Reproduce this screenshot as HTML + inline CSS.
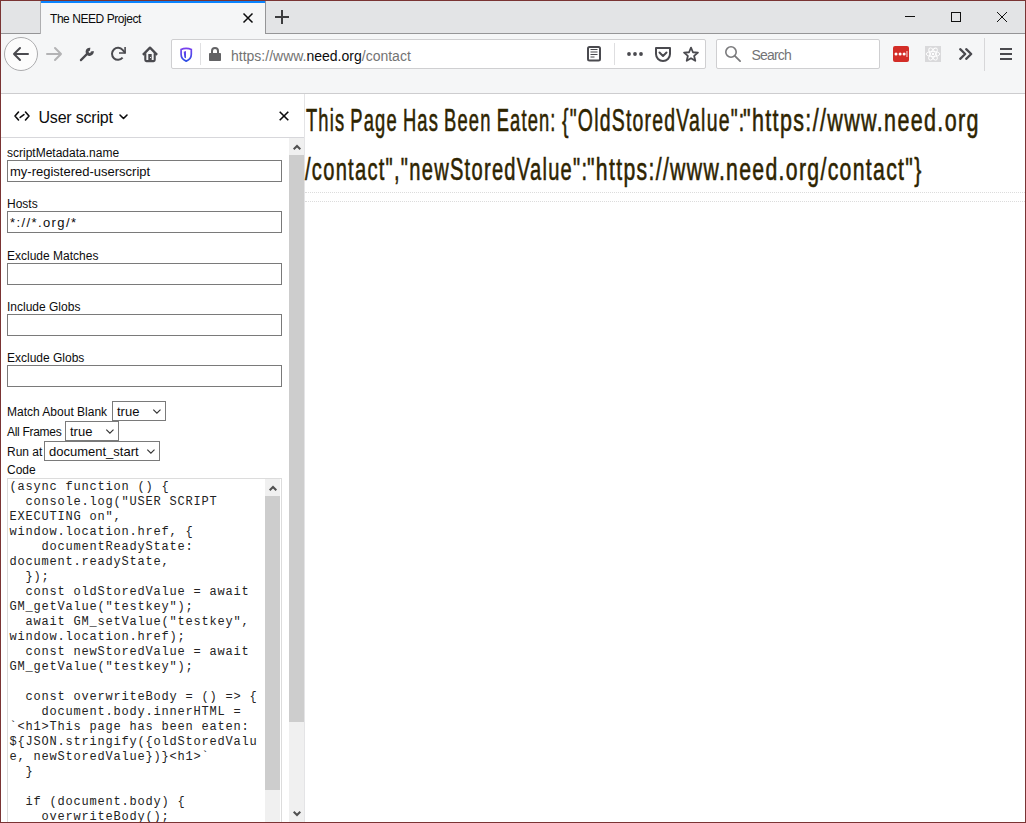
<!DOCTYPE html>
<html><head><meta charset="utf-8">
<style>
*{margin:0;padding:0;box-sizing:border-box}
html,body{width:1026px;height:823px;overflow:hidden;background:#fff;font-family:"Liberation Sans",sans-serif}
.a{position:absolute}
svg{position:absolute;overflow:visible}
#win{position:absolute;left:0;top:0;width:1026px;height:823px;border:1px solid #7a3434;overflow:hidden}
#tabbar{left:0;top:0;width:1024px;height:33px;background:#e3e4e6;border-bottom:1px solid #959597}
#tab{left:40px;top:0;width:225px;height:33px;background:#f5f6f7;border-right:1px solid #959597}
#tabline{left:40px;top:0;width:224px;height:2px;background:#0a84ff}
#nav{left:0;top:33px;width:1024px;height:60px;background:#f5f6f7;border-bottom:1px solid #cdcdcf}
.t{position:absolute;white-space:pre;line-height:1}
#urlbar{left:170px;top:38px;width:535px;height:30px;background:#fff;border:1px solid #cfcfd1;border-radius:2px}
#search{left:715px;top:38px;width:164px;height:30px;background:#fff;border:1px solid #cfcfd1;border-radius:2px}
#side{left:0;top:93px;width:303px;height:729px;background:#fff}
#split{left:303px;top:93px;width:1px;height:729px;background:#e4e4e6}
#shead{left:0;top:136px;width:303px;height:1px;background:#d7d7db}
.lab{font-size:12px;color:#0c0c0d}
.inp{position:absolute;left:6px;width:275px;height:22px;border:1px solid #7a7a7a;background:#fff}
.itx{font-size:13px;color:#0c0c0d}
.sel{position:absolute;height:20px;border:1px solid #7a7a7a;background:#fff}
#code{left:6px;top:477px;width:275px;height:360px;border:1px solid #dcdcdc;background:#fff}
#codetext{left:8.5px;top:479px;font-family:"Liberation Mono",monospace;font-size:12px;letter-spacing:0.8px;line-height:15px;color:#222;white-space:pre}
.h1{position:absolute;left:304px;font-size:32px;color:#2e2400;-webkit-text-stroke:0.6px #2e2400;letter-spacing:2px;word-spacing:-2px;white-space:pre;transform-origin:0 0;line-height:1}
</style></head><body>
<div id="win">
 <div id="tabbar" class="a"></div>
 <div id="tab" class="a"></div>
 <div id="tabline" class="a"></div>
 <div class="a" style="left:39px;top:0;width:1px;height:33px;background:#aeaeb0"></div>
 <div class="t" style="left:49px;top:12px;font-size:12px;color:#0c0c0d;letter-spacing:-0.45px">The NEED Project</div>
 <!-- tab close -->
 <svg style="left:242px;top:12px" width="10" height="10" viewBox="0 0 10 10"><path d="M0.5 0.5L9.5 9.5M9.5 0.5L0.5 9.5" stroke="#0c0c0d" stroke-width="1.5"/></svg>
 <!-- new tab -->
 <svg style="left:274px;top:9px" width="14" height="14" viewBox="0 0 14 14"><path d="M7 0V14M0 7H14" stroke="#3c3c3e" stroke-width="2"/></svg>
 <!-- window controls -->
 <svg style="left:904px;top:15px" width="10" height="1"><rect x="0" y="0" width="10" height="1" fill="#111"/></svg>
 <svg style="left:950px;top:11px" width="10" height="10"><rect x="0.5" y="0.5" width="9" height="9" fill="none" stroke="#111" stroke-width="1"/></svg>
 <svg style="left:996px;top:11px" width="10" height="10"><path d="M0 0L10 10M10 0L0 10" stroke="#111" stroke-width="1"/></svg>

 <div id="nav" class="a"></div>
 <!-- back -->
 <div class="a" style="left:3px;top:36px;width:34px;height:34px;border-radius:50%;border:1px solid #acacae;background:#fcfcfc"></div>
 <svg style="left:12px;top:45px" width="16" height="16" viewBox="0 0 16 16"><path d="M15 8H1M7 2L1 8L7 14" fill="none" stroke="#4a4a4f" stroke-width="2" stroke-linecap="round" stroke-linejoin="round"/></svg>
 <!-- forward -->
 <svg style="left:45px;top:45px" width="16" height="16" viewBox="0 0 16 16"><path d="M1 8H15M9 2L15 8L9 14" fill="none" stroke="#b3b3b5" stroke-width="2" stroke-linecap="round" stroke-linejoin="round"/></svg>
 <!-- wrench -->
 <svg style="left:78px;top:46px" width="16" height="16" viewBox="0 0 16 16"><path d="M1.9 13.1L8.4 6.6" stroke="#4a4a4f" stroke-width="2.2" stroke-linecap="round"/><path d="M13.26 4.35A2.6 2.6 0 1 1 11.15 2.24" fill="none" stroke="#4a4a4f" stroke-width="3"/></svg>
 <!-- reload -->
 <svg style="left:110px;top:46px" width="16" height="16" viewBox="0 0 16 16"><path d="M11.6 10.66A6 6 0 1 1 11.6 2.94L14.2 5.8" fill="none" stroke="#4a4a4f" stroke-width="2"/><path d="M13.3 0H14.9V6.7H8V5.2H13.3Z" fill="#4a4a4f"/></svg>
 <!-- home -->
 <svg style="left:141px;top:45px" width="16" height="17" viewBox="0 0 16 17"><path d="M0.9 8.9L8 1.6L15.1 8.9" fill="none" stroke="#4a4a4f" stroke-width="2.3" stroke-linejoin="round"/><path d="M3.3 7.3V14Q3.3 15.1 4.4 15.1H11.6Q12.7 15.1 12.7 14V7.3" fill="none" stroke="#4a4a4f" stroke-width="2.1"/><rect x="6.3" y="8" width="3.4" height="7" fill="#4a4a4f"/><rect x="8" y="11" width="1" height="1" fill="#e8e8e8"/></svg>

 <div id="urlbar" class="a"></div>
 <!-- shield -->
 <svg style="left:179px;top:46px" width="13" height="15" viewBox="0 0 13 15"><defs><linearGradient id="sg" gradientUnits="userSpaceOnUse" x1="0" y1="1" x2="0" y2="14"><stop offset="0" stop-color="#7a40ee"/><stop offset="1" stop-color="#2d4fe4"/></linearGradient></defs><path d="M6.2 1.3C8.2 1.3 9.9 1.7 11.3 2.4V7.2C11.3 10.5 9.2 12.9 6.2 14.1C3.2 12.9 1.1 10.5 1.1 7.2V2.4C2.5 1.7 4.2 1.3 6.2 1.3Z" fill="none" stroke="url(#sg)" stroke-width="1.7"/><path d="M3.7 4.7L6.0 4.1V11.3L4.4 10.4Z" fill="url(#sg)"/></svg>
 <div class="a" style="left:199px;top:42px;width:1px;height:22px;background:#e0e0e2"></div>
 <!-- lock -->
 <svg style="left:208px;top:46px" width="12" height="15" viewBox="0 0 12 15"><path d="M3 6.5V4A3 3 0 0 1 9 4V6.5" fill="none" stroke="#636365" stroke-width="2"/><rect x="0" y="6" width="12" height="8" rx="0.8" fill="#636365"/></svg>
 <div class="t" style="left:230px;top:48px;font-size:14px;color:#737373">https://www.<span style="color:#0c0c0d">need.org</span>/contact</div>
 <!-- reader -->
 <svg style="left:586px;top:45px" width="14" height="16" viewBox="0 0 14 16"><rect x="1" y="1" width="12" height="13.5" rx="1.5" fill="none" stroke="#4a4a4f" stroke-width="2"/><path d="M3.5 3.5H10.5M3.5 6H10.5M3.5 8.5H10.5M3.5 11H7.5" stroke="#4a4a4f" stroke-width="1.1"/></svg>
 <div class="a" style="left:613px;top:42px;width:1px;height:22px;background:#dedee0"></div>
 <!-- dots -->
 <svg style="left:626px;top:51px" width="16" height="4"><circle cx="2" cy="2" r="1.9" fill="#4a4a4f"/><circle cx="8" cy="2" r="1.9" fill="#4a4a4f"/><circle cx="14" cy="2" r="1.9" fill="#4a4a4f"/></svg>
 <!-- pocket -->
 <svg style="left:654px;top:46px" width="16" height="15" viewBox="0 0 16 15"><path d="M1 1H15V7A7 7 0 0 1 1 7Z" fill="none" stroke="#4a4a4f" stroke-width="2" stroke-linejoin="round"/><path d="M4.5 5.5L8 9L11.5 5.5" fill="none" stroke="#4a4a4f" stroke-width="2" stroke-linecap="round" stroke-linejoin="round"/></svg>
 <!-- star -->
 <svg style="left:682px;top:45px" width="16" height="16" viewBox="0 0 16 16"><path d="M8.00 1.60L9.94 6.23L14.94 6.64L11.14 9.92L12.29 14.81L8.00 12.20L3.71 14.81L4.86 9.92L1.06 6.64L6.06 6.23Z" fill="none" stroke="#4a4a4f" stroke-width="1.8" stroke-linejoin="round"/></svg>

 <div id="search" class="a"></div>
 <svg style="left:724px;top:45px" width="16" height="16" viewBox="0 0 16 16"><circle cx="6" cy="6" r="5.2" fill="none" stroke="#7a7a7c" stroke-width="1.6"/><path d="M9.8 9.8L15.1 15.1" stroke="#7a7a7c" stroke-width="1.8" stroke-linecap="round"/></svg>
 <div class="t" style="left:750.5px;top:47px;font-size:14px;color:#737375;letter-spacing:-0.8px">Search</div>

 <!-- lastpass -->
 <div class="a" style="left:892px;top:45px;width:16px;height:16px;background:#d32d27;border-radius:2px"></div>
 <svg style="left:892px;top:45px" width="16" height="16"><circle cx="3" cy="7.9" r="1.5" fill="#fff"/><circle cx="7.1" cy="7.9" r="1.5" fill="#fff"/><circle cx="11.1" cy="7.9" r="1.5" fill="#fff"/><rect x="13.4" y="5" width="1.1" height="6" fill="rgba(255,255,255,0.75)"/></svg>
 <!-- react -->
 <div class="a" style="left:924px;top:45px;width:16px;height:16px;background:#d9d9db"></div>
 <svg style="left:924px;top:45px" width="16" height="16" viewBox="0 0 16 16"><g fill="none" stroke="#fff" stroke-width="0.9"><ellipse cx="8" cy="8" rx="6.8" ry="2.6"/><ellipse cx="8" cy="8" rx="6.8" ry="2.6" transform="rotate(60 8 8)"/><ellipse cx="8" cy="8" rx="6.8" ry="2.6" transform="rotate(120 8 8)"/></g><circle cx="8" cy="8" r="1.2" fill="#fff"/></svg>
 <!-- chevrons -->
 <svg style="left:958px;top:47px" width="14" height="13" viewBox="0 0 14 13"><path d="M1.2 1.2L6.2 6L1.2 10.8M7.2 1.2L12.2 6L7.2 10.8" fill="none" stroke="#4a4a4f" stroke-width="2.3" stroke-linecap="round" stroke-linejoin="round"/></svg>
 <div class="a" style="left:983px;top:37px;width:1px;height:33px;background:#d7d7d9"></div>
 <!-- hamburger -->
 <svg style="left:999px;top:47px" width="12" height="13"><rect x="0" y="0" width="12" height="2" fill="#4a4a4f"/><rect x="0" y="5" width="12" height="2" fill="#4a4a4f"/><rect x="0" y="10" width="12" height="2" fill="#4a4a4f"/></svg>

 <!-- sidebar -->
 <div id="side" class="a"></div>
 <div id="split" class="a"></div>
 <div id="shead" class="a"></div>
 <svg style="left:13px;top:109px" width="16" height="12" viewBox="0 0 16 12"><path d="M4.5 2L1 6L4.5 10M11.5 2L15 6L11.5 10M9.9 4.6L6.2 7.4" fill="none" stroke="#0c0c0d" stroke-width="1.6" stroke-linecap="round" stroke-linejoin="round"/></svg>
 <div class="t" style="left:37.5px;top:109px;font-size:16px;color:#0c0c0d;letter-spacing:-0.2px">User script</div>
 <svg style="left:118px;top:113px" width="9" height="6" viewBox="0 0 9 6"><path d="M1 1L4.5 4.5L8 1" fill="none" stroke="#0c0c0d" stroke-width="1.6" stroke-linecap="round" stroke-linejoin="round"/></svg>
 <svg style="left:278px;top:110px" width="10" height="10" viewBox="0 0 10 10"><path d="M0.7 0.7L9.3 9.3M9.3 0.7L0.7 9.3" stroke="#0c0c0d" stroke-width="1.6"/></svg>

 <!-- sidebar scrollbar -->
 <div class="a" style="left:288px;top:137px;width:15px;height:685px;background:#f0f0f0"></div>
 <div class="a" style="left:288px;top:154px;width:15px;height:567px;background:#cdcdcd"></div>
 <svg style="left:292px;top:143px" width="8" height="6" viewBox="0 0 8 6"><path d="M0 4.6L4 0.6L8 4.6L6.6 6L4 3.4L1.4 6Z" fill="#505050"/></svg>
 <svg style="left:292px;top:810px" width="8" height="6" viewBox="0 0 8 6"><path d="M0 1.4L1.4 0L4 2.6L6.6 0L8 1.4L4 5.4Z" fill="#505050"/></svg>

 <div class="t lab" style="left:6px;top:146px">scriptMetadata.name</div>
 <div class="inp" style="top:159px"></div>
 <div class="t itx" style="left:9px;top:164px">my-registered-userscript</div>
 <div class="t lab" style="left:6px;top:197px">Hosts</div>
 <div class="inp" style="top:210px"></div>
 <div class="t itx" style="left:9px;top:215px;letter-spacing:1.4px">*://*.org/*</div>
 <div class="t lab" style="left:6px;top:249px">Exclude Matches</div>
 <div class="inp" style="top:262px"></div>
 <div class="t lab" style="left:6px;top:300px">Include Globs</div>
 <div class="inp" style="top:313px"></div>
 <div class="t lab" style="left:6px;top:351px">Exclude Globs</div>
 <div class="inp" style="top:364px"></div>

 <div class="t lab" style="left:6px;top:405px">Match About Blank</div>
 <div class="sel" style="left:111px;top:400px;width:54px"></div>
 <div class="t itx" style="left:116px;top:404px">true</div>
 <svg style="left:151px;top:408px" width="9" height="5" viewBox="0 0 9 5"><path d="M1.3 0.6L4.9 4.2L8.5 0.6" fill="none" stroke="#333" stroke-width="1.15"/></svg>
 <div class="t lab" style="left:6px;top:425px;letter-spacing:-0.3px">All Frames</div>
 <div class="sel" style="left:64px;top:420px;width:54px"></div>
 <div class="t itx" style="left:69px;top:424px">true</div>
 <svg style="left:104px;top:428px" width="9" height="5" viewBox="0 0 9 5"><path d="M1.3 0.6L4.9 4.2L8.5 0.6" fill="none" stroke="#333" stroke-width="1.15"/></svg>
 <div class="t lab" style="left:6px;top:445px">Run at</div>
 <div class="sel" style="left:43px;top:440px;width:116px"></div>
 <div class="t itx" style="left:48px;top:444px">document_start</div>
 <svg style="left:145px;top:448px" width="9" height="5" viewBox="0 0 9 5"><path d="M1.3 0.6L4.9 4.2L8.5 0.6" fill="none" stroke="#333" stroke-width="1.15"/></svg>
 <div class="t lab" style="left:6px;top:463px">Code</div>

 <div id="code" class="a"></div>
 <div id="codetext" class="a">(async function () {
  console.log("USER SCRIPT
EXECUTING on",
window.location.href, {
    documentReadyState:
document.readyState,
  });
  const oldStoredValue = await
GM_getValue("testkey");
  await GM_setValue("testkey",
window.location.href);
  const newStoredValue = await
GM_getValue("testkey");

  const overwriteBody = () =&gt; {
    document.body.innerHTML =
`&lt;h1&gt;This page has been eaten:
${JSON.stringify({oldStoredValu
e, newStoredValue})}&lt;h1&gt;`
  }

  if (document.body) {
    overwriteBody();
  }</div>
 <!-- code scrollbar -->
 <div class="a" style="left:264px;top:478px;width:15px;height:344px;background:#f0f0f0"></div>
 <div class="a" style="left:264px;top:495px;width:15px;height:294px;background:#cdcdcd"></div>
 <svg style="left:268px;top:484px" width="8" height="6" viewBox="0 0 8 6"><path d="M0 4.6L4 0.6L8 4.6L6.6 6L4 3.4L1.4 6Z" fill="#505050"/></svg>

 <!-- content -->
 <div class="h1" style="top:103px;left:304.6px;transform:scaleX(0.5736)">This Page Has Been Eaten:</div>
 <div class="h1" style="top:103px;left:560.5px;transform:scaleX(0.6077)">{"OldStoredValue":</div>
 <div class="h1" style="top:103px;left:742.03px;transform:scaleX(0.6723)">"https://www.need.org</div>
 <div class="h1" style="top:152px;left:304px;transform:scaleX(0.6291)">/contact","newStoredValue":</div>
 <div class="h1" style="top:152px;left:585.94px;transform:scaleX(0.6628)">"https://www.need.org/contact"}</div>
 <div class="a" style="left:304px;top:191px;width:720px;border-top:1px dotted #dcdcdc"></div>
 <div class="a" style="left:304px;top:200px;width:720px;border-top:1px dotted #dcdcdc"></div>
</div>
</body></html>
